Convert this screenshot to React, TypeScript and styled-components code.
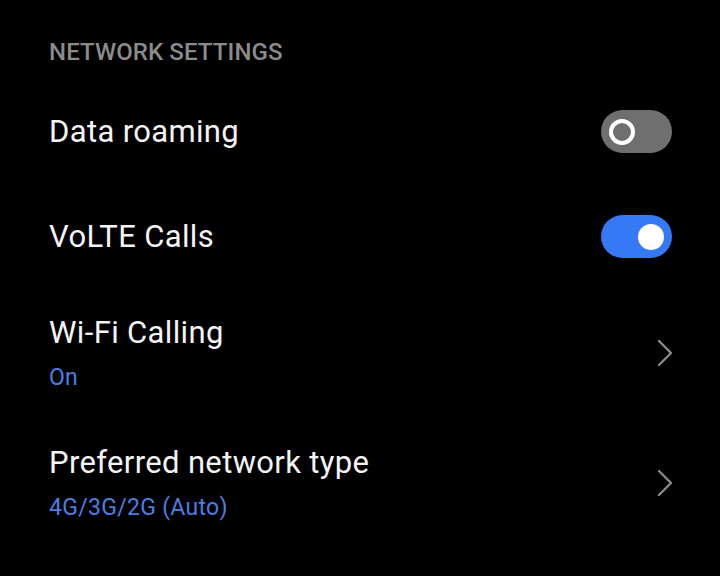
import React from "react";
import styled, { createGlobalStyle } from "styled-components";

const GlobalStyle = createGlobalStyle`
  html, body {
    margin: 0;
    padding: 0;
    background: #000;
  }
  body {
    font-family: Roboto, "Liberation Sans", sans-serif;
    -webkit-font-smoothing: antialiased;
  }
`;

const Screen = styled.div`
  width: 720px;
  height: 576px;
  background: #000;
  padding: 0 48px 0 49px;
  box-sizing: border-box;
  overflow: hidden;
`;

const SectionHeader = styled.div`
  margin: 37px 0 12px;
  font-size: 24px;
  line-height: 30px;
  font-weight: 500;
  color: #8b8b8b;
  letter-spacing: 0.1px;
`;

const Row = styled.div<{ $tall?: boolean }>`
  display: flex;
  align-items: center;
  justify-content: space-between;
  min-height: ${(p) => (p.$tall ? "130px" : "105px")};
`;

const Texts = styled.div`
  display: flex;
  flex-direction: column;
  margin-top: -2px;
`;

const Title = styled.div`
  font-size: 31px;
  line-height: 40px;
  letter-spacing: 0.35px;
  color: #f4f4f4;
`;

const Subtitle = styled.div`
  margin-top: 10px;
  font-size: 23px;
  line-height: 30px;
  letter-spacing: 0.3px;
  color: #4a7fe3;
`;

const Track = styled.div<{ $on: boolean }>`
  width: 71px;
  height: 43px;
  border-radius: 22px;
  box-sizing: border-box;
  padding: 0 8px;
  display: flex;
  align-items: center;
  justify-content: ${(p) => (p.$on ? "flex-end" : "flex-start")};
  background: ${(p) => (p.$on ? "#3579f4" : "#6f6f6f")};
`;

const Knob = styled.div<{ $on: boolean }>`
  width: 26px;
  height: 26px;
  border-radius: 50%;
  box-sizing: border-box;
  background: ${(p) => (p.$on ? "#fff" : "transparent")};
  border: ${(p) => (p.$on ? "none" : "4px solid #fff")};
`;

const Chevron = styled.svg`
  width: 16px;
  height: 28px;
  flex: none;
  margin: -3px -1px 0 0;
`;

const Toggle = ({ on }: { on: boolean }) => (
  <Track $on={on}>
    <Knob $on={on} />
  </Track>
);

const Arrow = () => (
  <Chevron viewBox="0 0 16 28">
    <polyline
      points="2,2 14,14 2,26"
      fill="none"
      stroke="#8a8a8a"
      strokeWidth="2.4"
      strokeLinecap="round"
      strokeLinejoin="round"
    />
  </Chevron>
);

export default function App() {
  return (
    <>
      <GlobalStyle />
      <Screen>
        <SectionHeader>NETWORK SETTINGS</SectionHeader>
        <Row>
          <Title>Data roaming</Title>
          <Toggle on={false} />
        </Row>
        <Row>
          <Title>VoLTE Calls</Title>
          <Toggle on={true} />
        </Row>
        <Row $tall>
          <Texts>
            <Title>Wi-Fi Calling</Title>
            <Subtitle>On</Subtitle>
          </Texts>
          <Arrow />
        </Row>
        <Row $tall>
          <Texts>
            <Title>Preferred network type</Title>
            <Subtitle>4G/3G/2G (Auto)</Subtitle>
          </Texts>
          <Arrow />
        </Row>
      </Screen>
    </>
  );
}
